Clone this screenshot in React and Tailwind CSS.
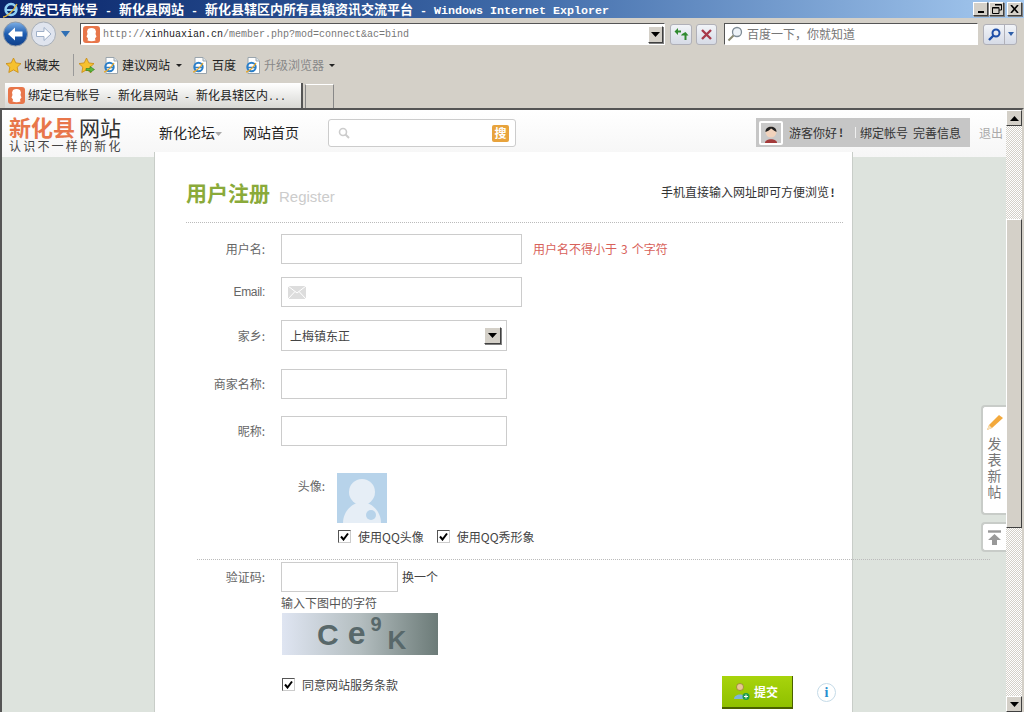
import React from "react";

const Mono = ({ children, className = "" }) => (
  <span className={"font-['Liberation_Mono'] " + className}>{children}</span>
);

const Arrow = ({ up = false }) => (
  <svg width="9" height="5" viewBox="0 0 9 5">
    <path d={up ? "M4.5 0L9 5H0Z" : "M0 0H9L4.5 5Z"} fill="#000" />
  </svg>
);

const Caret = () => (
  <svg width="6" height="3" viewBox="0 0 6 3" className="shrink-0"><path d="M0 0H6L3 3Z" fill="#222" /></svg>
);

const ClassicBtn = ({ className = "", children }) => (
  <div className={"flex items-center justify-center bg-[#d4d0c8] border border-t-white border-l-white border-r-[#404040] border-b-[#404040] shadow-[1px_1px_0_#808080] " + className}>
    {children}
  </div>
);

const Favicon = () => (
  <svg width="17" height="17" viewBox="0 0 17 17" className="shrink-0">
    <rect width="17" height="17" rx="3" fill="#e8764a" />
    <path d="M5 3Q8.5 1 12 3L13 5.5 12.5 8 13.5 10.5 12 12.5 12.5 14.5Q8.5 16 4.5 14.5L5 12.5 3.5 10.5 4.5 8 4 5.5Z" fill="#fff" />
  </svg>
);

const IEPage = () => (
  <svg width="15" height="17" viewBox="0 0 15 17" className="shrink-0">
    <path d="M3 .5H11L14.500 4V16.500H3Z" fill="#fff" stroke="#9aa5ad" />
    <path d="M11 .5V4H14.500" fill="#dfe6ea" stroke="#9aa5ad" />
    <circle cx="6.500" cy="10" r="4.200" fill="none" stroke="#2a7fc9" strokeWidth="2" />
    <path d="M2.500 10.500H10.500" stroke="#2a7fc9" strokeWidth="1.500" />
    <path d="M1 15C3 15 8 11 11 6" fill="none" stroke="#e9a92c" strokeWidth="1.300" />
  </svg>
);

const Star = ({ arrow }) => (
  <svg width="17" height="17" viewBox="0 0 17 17" className="shrink-0">
    <path d="M8.500 1L10.800 5.900 16 6.600 12.200 10.200 13.200 15.500 8.500 12.900 3.800 15.500 4.800 10.200 1 6.600 6.200 5.900Z" fill="#f6c12e" stroke="#c98a10" strokeWidth=".8" />
    {arrow && <path d="M8 11.500H12V9.500L16.500 12.500 12 15.500V13.500H8Z" fill="#5db83a" stroke="#2f7d1c" strokeWidth=".6" />}
  </svg>
);

const Check = () => (
  <span className="flex h-[13px] w-[13px] shrink-0 items-center justify-center border border-t-[#555] border-l-[#555] border-r-[#ccc] border-b-[#ccc] bg-white">
    <svg width="9" height="9" viewBox="0 0 9 9">
      <path d="M1 4.500L3.500 7.500 8 1.500" fill="none" stroke="#000" strokeWidth="2" />
    </svg>
  </span>
);

const Label = ({ children, className = "w-[110px] mr-[2px] text-[12px]" }) => (
  <span className={"shrink-0 text-right text-[#666] " + className}>{children}</span>
);

const TextBox = ({ className = "", children }) => (
  <div className={"h-[30px] border border-[#ccc] bg-white " + className}>{children}</div>
);

export default function App() {
  return (
    <div className="flex h-[712px] w-[1024px] flex-col overflow-hidden bg-[#d4d0c8] font-['Noto_Sans_CJK_SC',sans-serif] text-[12px] leading-none">
      {/* Title bar */}
      <div className="flex h-[18px] shrink-0 items-center bg-gradient-to-r from-[#0a246a] via-[#3f6aa8] to-[#a6caf0] pl-[2px] pr-[2px]">
        <svg width="17" height="17" viewBox="0 0 17 17" className="shrink-0">
          <circle cx="9" cy="8.500" r="5.500" fill="none" stroke="#8fd0f5" strokeWidth="2.400" />
          <path d="M3.500 9H14.500" stroke="#8fd0f5" strokeWidth="2" />
          <path d="M1 16C4 16 11 11 15 3" fill="none" stroke="#e7b53a" strokeWidth="1.300" />
        </svg>
        <div className="ml-[1px] mt-[1px] flex-1 whitespace-pre text-[13px] font-bold text-white">
          绑定已有帐号<Mono className="text-[11.67px]"> - </Mono>新化县网站<Mono className="text-[11.67px]"> - </Mono>新化县辖区内所有县镇资讯交流平台<Mono className="text-[11.67px]"> - Windows Internet Explorer</Mono>
        </div>
        <ClassicBtn className="h-[14px] w-[15px] items-end pb-[2px]"><span className="h-[2px] w-[6px] bg-black" /></ClassicBtn>
        <ClassicBtn className="ml-[1px] h-[14px] w-[15px]">
          <svg width="10" height="10" viewBox="0 0 10 10"><path d="M3 .5H9.500V6H7M.5 3.500H7V9.500H.5Z" fill="none" stroke="#000" /><path d="M3 1H9.500M.5 4H7" stroke="#000" /></svg>
        </ClassicBtn>
        <ClassicBtn className="ml-[3px] h-[14px] w-[15px]">
          <svg width="9" height="8" viewBox="0 0 9 8"><path d="M1 0L8 8M8 0L1 8" stroke="#000" strokeWidth="1.600" /></svg>
        </ClassicBtn>
      </div>

      {/* Address row */}
      <div className="flex h-[32px] shrink-0 items-center pl-[3px]">
        <svg width="25" height="26" viewBox="0 0 25 26" className="shrink-0">
          <defs>
            <linearGradient id="bk" x1="0" y1="0" x2="0" y2="1"><stop offset="0" stopColor="#7fb0e6" /><stop offset=".5" stopColor="#1d5cb0" /><stop offset="1" stopColor="#0f3f8a" /></linearGradient>
          </defs>
          <circle cx="12.500" cy="13" r="12" fill="url(#bk)" stroke="#8f9aa8" />
          <path d="M5 13L12 6.500V10.500H19.500V15.500H12V19.500Z" fill="#fff" />
        </svg>
        <svg width="25" height="26" viewBox="0 0 25 26" className="ml-[3px] shrink-0">
          <circle cx="12.500" cy="13" r="12" fill="#dfe4ee" stroke="#a8afb8" />
          <path d="M20 13L13 6.500V10.500H5.500V15.500H13V19.500Z" fill="#fff" stroke="#9fb0c8" />
        </svg>
        <svg width="9" height="6" viewBox="0 0 9 6" className="ml-[5px] shrink-0"><path d="M0 0H9L4.500 6Z" fill="#2f6fb5" /></svg>
        <div className="ml-[10px] flex h-[22px] w-[585px] items-center border border-t-[#555] border-l-[#555] border-r-white border-b-white bg-white pl-[2px]">
          <Favicon />
          <div className="ml-[3px] flex-1 whitespace-pre text-[10px] text-[#777]">
            <Mono>http://</Mono><Mono className="text-[#222]">xinhuaxian.cn</Mono><Mono>/member.php?mod=connect&amp;ac=bind</Mono>
          </div>
          <ClassicBtn className="mr-[1px] h-[17px] w-[15px]"><Arrow /></ClassicBtn>
        </div>
        <div className="ml-[5px] flex h-[21px] w-[22px] items-center justify-center rounded-[3px] border border-[#b0b0b8] bg-gradient-to-b from-[#f2f4f8] to-[#d6dbe6]">
          <svg width="15" height="14" viewBox="0 0 15 14"><path d="M7 3.500H4V1L.5 4.500 4 8V5.500H7Z" fill="#2f8a2f" /><path d="M7 8.500H10.500V13H12.500V8.500H14.500L11.500 5 8 7Z" fill="#2f8a2f" /></svg>
        </div>
        <div className="ml-[4px] flex h-[21px] w-[21px] items-center justify-center rounded-[3px] border border-[#b0b0b8] bg-gradient-to-b from-[#f2f4f8] to-[#d6dbe6]">
          <svg width="11" height="11" viewBox="0 0 11 11"><path d="M1 1L10 10M10 1L1 10" stroke="#a83a4a" strokeWidth="2.400" /></svg>
        </div>
        <div className="ml-[7px] flex h-[22px] w-[254px] items-center border border-t-[#555] border-l-[#555] border-r-white border-b-white bg-white pl-[2px] text-[12px] text-[#777]">
          <svg width="16" height="16" viewBox="0 0 16 16" className="shrink-0"><circle cx="10" cy="6" r="4.500" fill="#eef3f8" stroke="#7f8c96" strokeWidth="1.300" /><path d="M6.500 9.500L1.500 14.500" stroke="#8a8a70" strokeWidth="2" /></svg>
          <span className="ml-[4px]">百度一下，你就知道</span>
        </div>
        <div className="ml-[5px] flex h-[21px] w-[34px] rounded-[3px] border border-[#b0b0b8] bg-gradient-to-b from-[#f2f4f8] to-[#d6dbe6]">
          <div className="flex w-[21px] items-center justify-center border-r border-[#b0b0b8]">
            <svg width="13" height="13" viewBox="0 0 13 13"><circle cx="8" cy="5" r="3.500" fill="none" stroke="#1f4fa8" strokeWidth="2" /><path d="M5.500 7.500L1 12" stroke="#1f4fa8" strokeWidth="2.400" /></svg>
          </div>
          <div className="flex flex-1 items-center justify-center">
            <svg width="6" height="4" viewBox="0 0 6 4"><path d="M0 0H6L3 4Z" fill="#2f5fa8" /></svg>
          </div>
        </div>
      </div>

      {/* Favourites row */}
      <div className="flex h-[30px] shrink-0 items-center pl-[5px] text-[12px] text-[#222]">
        <Star />
        <span className="ml-[2px]">收藏夹</span>
        <span className="ml-[13px] h-[22px] w-[2px] border-l border-[#999]" />
        <span className="ml-[3px]"><Star arrow /></span>
        <span className="ml-[8px]"><IEPage /></span>
        <span className="ml-[4px]">建议网站</span>
        <span className="ml-[6px]"><Caret /></span>
        <span className="ml-[10px]"><IEPage /></span>
        <span className="ml-[5px]">百度</span>
        <span className="ml-[9px]"><IEPage /></span>
        <span className="ml-[4px] text-[#888]">升级浏览器</span>
        <span className="ml-[5px]"><Caret /></span>
      </div>

      {/* Tab row */}
      <div className="flex h-[28px] shrink-0 items-end pl-[5px]">
        <div className="flex h-[25px] w-[298px] items-center border-r-2 border-[#555] bg-gradient-to-b from-white to-[#d8d8d4] pl-[3px] text-[12px] text-[#222]">
          <Favicon />
          <span className="ml-[3px] whitespace-pre">绑定已有帐号<Mono className="text-[10px]"> - </Mono>新化县网站<Mono className="text-[10px]"> - </Mono>新化县辖区内<Mono className="text-[10px]">...</Mono></span>
        </div>
        <div className="ml-[2px] h-[24px] w-[29px] border border-b-0 border-[#888] border-t-[#fff] bg-[#d4d0c8]" />
      </div>

      {/* Window content */}
      <div className="flex min-h-0 flex-1 border-t-2 border-l-2 border-[#555] border-r-2 border-r-[#d4d0c8]">
        <div className="relative min-w-0 flex-1 overflow-hidden bg-[#dde3dd]">
          {/* Header */}
          <div className="flex h-[47px] items-start bg-gradient-to-b from-white to-[#f6f6f6]">
            <div className="ml-[7px] mt-[4px] w-[120px] shrink-0 font-bold leading-none">
              <div className="whitespace-nowrap text-[22px] leading-[24px] text-[#e8764a]">新化县<span className="ml-[4px] text-[21px] font-normal text-[#333]">网站</span></div>
              <div className="mt-[1px] whitespace-nowrap text-[12px] font-normal tracking-[2.200px] text-[#444]">认识不一样的新化</div>
            </div>
            <div className="ml-[30px] mt-[15px] flex shrink-0 items-center whitespace-nowrap text-[14px] text-[#222]">
              <span>新化论坛</span>
              <svg width="7" height="4" viewBox="0 0 7 4" className="mt-[3px]"><path d="M0 0H7L3.500 4Z" fill="#aaa" /></svg>
              <span className="ml-[21px]">网站首页</span>
            </div>
            <div className="ml-[29px] mt-[9px] flex h-[28px] w-[188px] shrink-0 items-center rounded-[3px] border border-[#ccc] bg-white pl-[9px] pr-[6px]">
              <svg width="12" height="12" viewBox="0 0 12 12" className="shrink-0"><circle cx="5" cy="5" r="3.500" fill="none" stroke="#ccc" strokeWidth="1.600" /><path d="M7.500 7.500L11 11" stroke="#ccc" strokeWidth="2" /></svg>
              <span className="ml-auto flex h-[17px] w-[17px] items-center justify-center rounded-[2px] bg-[#e8a33c] text-[12px] font-bold text-white">搜</span>
            </div>
            <div className="ml-[240px] mt-[8px] flex h-[29px] w-[214px] shrink-0 items-center whitespace-nowrap bg-[#c6c6c6] pl-[3px] text-[12px] text-[#333]">
              <div className="flex h-[24px] w-[24px] items-center justify-center rounded-[2px] bg-white">
                <svg width="20" height="20" viewBox="0 0 20 20">
                  <rect width="20" height="20" fill="#c9c9c9" />
                  <path d="M4 20C4 15 16 15 16 20Z" fill="#a33a3a" />
                  <circle cx="10" cy="9" r="5.500" fill="#f1d2bc" />
                  <path d="M4.500 9C4 2 16 2 15.500 9 13 8 11 6 10 5.500 9 7 7 8 4.500 9Z" fill="#222" />
                </svg>
              </div>
              <span className="ml-[6px]">游客你好</span>
              <b className="w-[8px] text-center text-[11px]">!</b>
              <span className="ml-[10px] h-[11px] w-[1px] bg-[#eee]" />
              <span className="ml-[4px]">绑定帐号</span>
              <span className="ml-[5px]">完善信息</span>
            </div>
            <span className="ml-[9px] mt-[17px] shrink-0 whitespace-nowrap text-[12px] text-[#aaa]">退出</span>
          </div>

          {/* Panel */}
          <div className="relative ml-[152px] mt-[-5px] h-[600px] w-[699px] border-x border-[#c8cdc8] bg-white">
            <div className="ml-[31px] mr-[9px] flex h-[71px] items-start border-b border-dotted border-[#bbb] pt-[28px]">
              <span className="text-[21px] font-bold leading-[24px] text-[#8aaa3a]">用户注册</span>
              <span className="ml-[9px] mt-[9px] font-['Liberation_Sans'] text-[15px] text-[#ccc]">Register</span>
              <span className="ml-auto mr-[7px] mt-[6px] flex items-center text-[12px] text-[#333]">手机直接输入网址即可方便浏览<b className="w-[7px] text-center text-[11px]">!</b></span>
            </div>

            <div className="mt-[11px] flex items-center">
              <Label>用户名:</Label>
              <TextBox className="ml-[14px] w-[241px] border-[#999]" />
              <span className="ml-[11px] text-[12px] text-[#d8615a]">用户名不得小于<span className="mx-[4px]">3</span>个字符</span>
            </div>
            <div className="mt-[13px] flex items-center">
              <Label className="mr-[2px] w-[110px] font-['Liberation_Sans'] text-[12px] tracking-[-0.3px]">Email:</Label>
              <TextBox className="ml-[14px] flex w-[241px] items-center pl-[6px]">
                <svg width="18" height="13" viewBox="0 0 18 13"><rect width="18" height="13" fill="#ddd" /><path d="M0 0L9 7 18 0M0 13L7 5.500M18 13L11 5.500" fill="none" stroke="#fff" /></svg>
              </TextBox>
            </div>
            <div className="mt-[13px] flex items-center">
              <Label>家乡:</Label>
              <TextBox className="ml-[14px] flex h-[31px] w-[226px] items-center pl-[8px] pr-[5px] text-[12px] text-[#444]">
                <span>上梅镇东正</span>
                <ClassicBtn className="ml-auto h-[17px] w-[17px]"><Arrow /></ClassicBtn>
              </TextBox>
            </div>
            <div className="mt-[18px] flex items-center">
              <Label>商家名称:</Label>
              <TextBox className="ml-[14px] w-[226px]" />
            </div>
            <div className="mt-[17px] flex items-center">
              <Label>昵称:</Label>
              <TextBox className="ml-[14px] w-[226px]" />
            </div>

            <div className="mt-[27px] flex items-start">
              <Label className="w-[170px] pt-[7px] text-[12px]">头像:</Label>
              <svg width="50" height="50" viewBox="0 0 50 50" className="ml-[12px] shrink-0">
                <rect width="50" height="50" fill="#b7d3ea" />
                <circle cx="25" cy="19" r="13" fill="#e6eef6" />
                <path d="M6 50C6 38 16 29 25 29S44 38 44 50Z" fill="#e6eef6" />
                <circle cx="34" cy="42" r="5" fill="#b7d3ea" />
              </svg>
            </div>
            <div className="ml-[183px] mt-[7px] flex items-center text-[12px] text-[#444]">
              <Check />
              <span className="ml-[7px]">使用QQ头像</span>
              <span className="ml-[13px]"><Check /></span>
              <span className="ml-[7px]">使用QQ秀形象</span>
            </div>

            <div className="relative z-10 ml-[42px] mt-[16px] w-[793px] border-b border-dotted border-[#bbb]" />

            <div className="mt-[2px] flex items-center">
              <Label>验证码:</Label>
              <TextBox className="ml-[14px] w-[117px]" />
              <span className="ml-[4px] text-[12px] text-[#444]">换一个</span>
            </div>
            <div className="ml-[126px] mt-[5px] text-[12px] leading-[12px] text-[#555]">输入下图中的字符</div>
            <div className="ml-[127px] mt-[4px] flex h-[42px] w-[156px] items-start bg-gradient-to-r from-[#dfe5f2] via-[#b4bec0] to-[#6c7b78] pl-[35px] font-['Liberation_Sans'] font-bold text-[#58686a]">
              <span className="mt-[8px] text-[30px] leading-[28px]">C</span>
              <span className="ml-[9px] mt-[6px] text-[32px] leading-[28px]">e</span>
              <span className="ml-[5px] mt-[1px] text-[20px] leading-[20px]">9</span>
              <span className="ml-[6px] mt-[13px] text-[26px] leading-[28px]">K</span>
            </div>

            <div className="mt-[21px] flex items-start">
              <div className="ml-[127px] mt-[2px] flex w-[115px] shrink-0 items-center whitespace-nowrap text-[12px] text-[#444]">
                <Check />
                <span className="ml-[7px]">同意网站服务条款</span>
              </div>
              <div className="ml-[325px] flex h-[33px] w-[71px] shrink-0 items-center border-r border-b-2 border-[#4a6000] bg-gradient-to-b from-[#a8d40c] to-[#8fc000] pl-[11px]">
                <svg width="17" height="18" viewBox="0 0 17 18" className="shrink-0">
                  <circle cx="7" cy="4" r="3.500" fill="#e8c890" stroke="#8a6a30" strokeWidth=".6" />
                  <path d="M1 16C1 10 13 10 13 16Z" fill="#7fb4d8" />
                  <circle cx="13" cy="13.500" r="3.500" fill="#1f9a4a" />
                  <path d="M11 13.500H15M13 11.500V15.500" stroke="#fff" />
                </svg>
                <span className="ml-[4px] text-[12px] font-bold text-white">提交</span>
              </div>
              <div className="ml-[24px] mt-[7px] flex h-[19px] w-[19px] shrink-0 items-center justify-center rounded-full border border-[#c5dbe8] bg-white font-['Liberation_Serif'] text-[14px] font-bold text-[#2a8fd0]">i</div>
            </div>
          </div>

          {/* Floating side buttons */}
          <div className="absolute left-[979px] top-[295px] flex h-[110px] w-[25px] flex-col items-center rounded-l-[4px] border-2 border-r-0 border-[#c8ccc8] bg-white pt-[7px] text-[14px] text-[#777]">
            <svg width="18" height="17" viewBox="0 0 18 17"><path d="M1 16L3 11 13 1 17 4 6 14Z" fill="#f3a93c" /><path d="M1 16L3 11 6 14Z" fill="#f6dfb8" /></svg>
            <span className="mt-[4px] h-[16px] leading-[16px]">发</span>
            <span className="h-[16px] leading-[16px]">表</span>
            <span className="h-[16px] leading-[16px]">新</span>
            <span className="h-[16px] leading-[16px]">帖</span>
          </div>
          <div className="absolute left-[979px] top-[412px] flex h-[30px] w-[25px] items-center justify-center rounded-l-[4px] border-2 border-r-0 border-[#c8ccc8] bg-white">
            <svg width="15" height="15" viewBox="0 0 15 15"><path d="M1 1.500H14" stroke="#999" strokeWidth="2.400" /><path d="M7.500 4L14 10H10V15H5V10H1Z" fill="#999" /></svg>
          </div>
        </div>

        {/* Scrollbar */}
        <div className="flex w-[16px] shrink-0 flex-col bg-[repeating-conic-gradient(#d4d0c8_0_25%,#ffffff_0_50%)] bg-[length:2px_2px]">
          <ClassicBtn className="h-[16px] w-[16px] shadow-none"><Arrow up /></ClassicBtn>
          <ClassicBtn className="mt-[93px] h-[309px] w-[16px] shadow-none" />
          <ClassicBtn className="mt-auto h-[16px] w-[16px] shadow-none"><Arrow /></ClassicBtn>
        </div>
      </div>
    </div>
  );
}
